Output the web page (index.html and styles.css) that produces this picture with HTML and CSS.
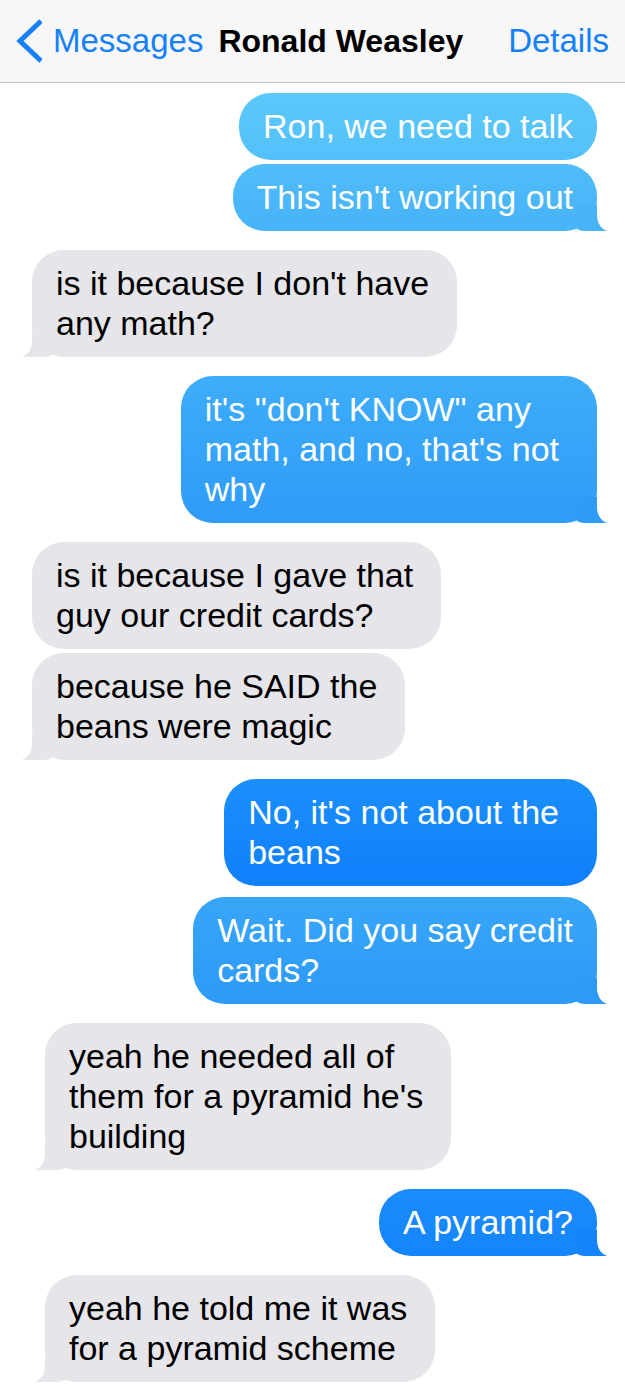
FILE: index.html
```html
<!DOCTYPE html>
<html lang="en">
<head>
  <meta charset="UTF-8">
  <meta name="viewport" content="width=device-width, initial-scale=1.0">
  <title>Ronald Weasley - Messages</title>
  <link rel="stylesheet" href="styles.css">
</head>
<body>
  <!-- Navigation bar -->
  <header class="nav">
    <a class="nav-back" href="#">
      <svg class="nav-chevron" width="28" height="44" viewBox="0 0 28 44" aria-hidden="true">
        <polyline points="27,2 6,22 27,42" fill="none" stroke="#1580fa" stroke-width="5" stroke-linejoin="miter"/>
      </svg>
      <span>Messages</span>
    </a>
    <h1 class="nav-title">Ronald Weasley</h1>
    <a class="nav-action" href="#">Details</a>
  </header>

  <!-- Conversation -->
  <main class="thread">
    <div class="msg sent tone-1">Ron, we need to talk</div>
    <div class="msg sent tone-2 tail cont">This isn't working out</div>

    <div class="msg recv tail">is it because I don't have<br>any math?</div>

    <div class="msg sent tone-3 tail roomy">it's "don't KNOW" any<br>math, and no, that's not<br>why</div>

    <div class="msg recv">is it because I gave that<br>guy our credit cards?</div>
    <div class="msg recv tail cont">because he SAID the<br>beans were magic</div>

    <div class="msg sent tone-4 roomy">No, it's not about the<br>beans</div>
    <div class="msg sent tone-5 tail near">Wait. Did you say credit<br>cards?</div>

    <div class="msg recv tail shift">yeah he needed all of<br>them for a pyramid he's<br>building</div>

    <div class="msg sent tone-6 tail">A pyramid?</div>

    <div class="msg recv tail shift">yeah he told me it was<br>for a pyramid scheme</div>
  </main>
</body>
</html>
```

FILE: styles.css
```css
/* Base */
body {
  margin: 0;
  width: 625px;
  background-color: #fff;
  font-family: "Liberation Sans", Arial, sans-serif;
  color: #000;
}

/* Navigation bar */
.nav {
  display: flex;
  align-items: center;
  height: 82px;
  padding: 0 16px 0 14px;
  background-color: #f7f7f8;
  border-bottom: 1px solid #c2c2c6;
  font-size: 33px;
}

.nav a {
  color: #1580fa;
  text-decoration: none;
}

.nav-back {
  display: flex;
  align-items: center;
  gap: 11px;
}

.nav-chevron {
  display: block;
}

.nav-title {
  margin: 0 0 0 15px;
  font-size: 32px;
  font-weight: bold;
}

.nav-action {
  margin-left: auto;
}

/* Conversation */
.thread {
  display: flex;
  flex-direction: column;
  padding: 10px 0 20px;
}

.msg {
  position: relative;
  max-width: 440px;
  padding: 13px 24px 14px;
  border-radius: 32px;
  font-size: 34px;
  line-height: 40px;
  margin-top: 19px;
}

.msg:first-child {
  margin-top: 0;
}

.msg.cont {
  margin-top: 4px;
}

.msg.near {
  margin-top: 11px;
}

.msg.roomy {
  padding-right: 38px;
}

.sent {
  align-self: flex-end;
  margin-right: 28px;
  color: #fff;
  background: linear-gradient(var(--top), var(--bottom));
}

.recv {
  align-self: flex-start;
  margin-left: 32px;
  padding-right: 28px;
  background-color: #e5e5ea;
  --bottom: #e5e5ea;
}

.recv.shift {
  margin-left: 45px;
}

.tone-1 { --top: #5bc8fb; --bottom: #53c0fa; }
.tone-2 { --top: #50bcf9; --bottom: #47b3f9; }
.tone-3 { --top: #3eadf9; --bottom: #2f9bf8; }
.tone-4 { --top: #1a8ffb; --bottom: #0f80fb; }
.tone-5 { --top: #37a6f8; --bottom: #2d9af7; }
.tone-6 { --top: #1b8cfb; --bottom: #1484fb; }

/* Bubble tails */
.tail::before,
.tail::after {
  content: "";
  position: absolute;
  bottom: 0;
  height: 26px;
}

.tail::before {
  width: 30px;
  background-color: var(--bottom);
}

.tail::after {
  width: 14px;
  background-color: #fff;
}

.sent.tail::before {
  right: -10px;
  border-bottom-left-radius: 8px 3px;
}

.sent.tail::after {
  right: -14px;
  border-bottom-left-radius: 12px 16px;
}

.recv.tail::before {
  left: -10px;
  border-bottom-right-radius: 8px 3px;
}

.recv.tail::after {
  left: -14px;
  border-bottom-right-radius: 12px 16px;
}
```
